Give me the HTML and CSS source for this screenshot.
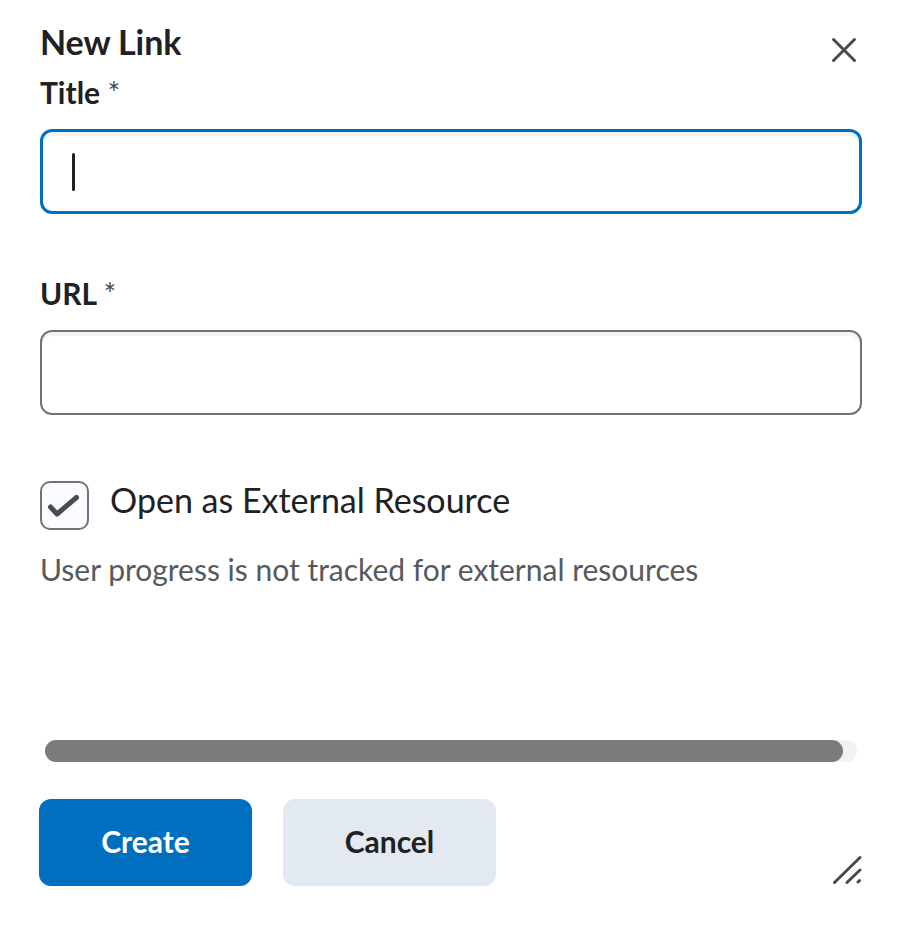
FILE: index.html
```html
<!DOCTYPE html>
<html lang="en">
<head>
    <meta charset="UTF-8">
    <meta name="viewport" content="width=device-width, initial-scale=1.0">
    <title>New Link</title>
    <link rel="stylesheet" href="styles.css">
</head>
<body>
    <div class="dialog">
        <div class="header">
            <h1>New Link</h1>
            <button class="close" aria-label="Close">
                <svg width="26" height="26" viewBox="0 0 26 26">
                    <path d="M2.5 2.5 L23.5 23.5 M23.5 2.5 L2.5 23.5" stroke="#494c4e" stroke-width="3" stroke-linecap="round" fill="none"/>
                </svg>
            </button>
        </div>

        <div class="field">
            <label class="label">Title <span class="req">*</span></label>
            <div class="input focused"><span class="caret"></span></div>
        </div>

        <div class="field url-field">
            <label class="label">URL <span class="req">*</span></label>
            <div class="input"></div>
        </div>

        <div class="check-row">
            <span class="checkbox">
                <svg width="45" height="45" viewBox="0 0 45 45">
                    <path d="M8.5 24 L15 31 L34.5 14.5" stroke="#494c4e" stroke-width="5" stroke-linecap="round" stroke-linejoin="round" fill="none"/>
                </svg>
            </span>
            <span class="check-label">Open as External Resource</span>
        </div>
        <p class="help">User progress is not tracked for external resources</p>

        <div class="scrollbar"><div class="thumb"></div></div>

        <div class="footer">
            <div class="buttons">
                <button class="btn primary">Create</button>
                <button class="btn secondary">Cancel</button>
            </div>
            <svg class="grip" width="30" height="30" viewBox="0 0 30 30">
                <path d="M2.5 27.5 L28 2.5 M15 27.5 L28 15 M26 27 L27.5 25.5" stroke="#494c4e" stroke-width="3" stroke-linecap="round" fill="none"/>
            </svg>
        </div>
    </div>
</body>
</html>
```

FILE: styles.css
```css
body {
    margin: 0;
    background: #fff;
    font-family: Lato, "Open Sans", sans-serif;
    color: #202122;
}
.dialog {
    padding: 21px 36px 0 40px;
}
.header {
    display: flex;
    justify-content: space-between;
    align-items: flex-start;
    height: 42px;
}
h1 {
    margin: 0;
    font-size: 34px;
    font-weight: 700;
    line-height: 42px;
    letter-spacing: -0.1px;
}
.close {
    background: none;
    border: none;
    padding: 0;
    margin: 16px 5px 0 0;
    cursor: pointer;
}
.close svg {
    display: block;
}
.field {
    margin-top: 11px;
}
.url-field {
    margin-top: 61px;
}
.label {
    display: block;
    font-size: 30px;
    font-weight: 700;
    line-height: 36px;
}
.req {
    font-weight: 400;
    color: #494c4e;
}
.input {
    margin-top: 19px;
    height: 85px;
    border: 2px solid #6e7477;
    border-radius: 12px;
    box-sizing: border-box;
    box-shadow: inset 0 4px 0 #f1f3f5;
    display: flex;
    align-items: center;
    padding-left: 30px;
}
.input.focused {
    border: 3px solid #006fbf;
    padding-left: 29px;
}
.caret {
    width: 3px;
    height: 38px;
    border-radius: 2px;
    background: #202122;
}
.check-row {
    display: flex;
    align-items: flex-start;
    margin-top: 66px;
}
.checkbox {
    width: 49px;
    height: 49px;
    box-sizing: border-box;
    border: 2px solid #6e7477;
    border-radius: 10px;
    background: #f9fbff;
}
.checkbox svg {
    display: block;
}
.check-label {
    margin: -1px 0 0 21px;
    font-size: 34px;
    line-height: 40px;
}
.help {
    margin: 21px 0 0;
    font-size: 30px;
    line-height: 36px;
    color: #565a5c;
}
.scrollbar {
    margin: 153px 5px 0 5px;
    height: 22px;
    border-radius: 11px;
    background: #f2f2f2;
}
.thumb {
    width: 798px;
    height: 22px;
    border-radius: 11px;
    background: #7b7b7b;
}
.footer {
    display: flex;
    justify-content: space-between;
    align-items: flex-end;
    margin-top: 37px;
}
.buttons {
    display: flex;
    gap: 31px;
    margin-left: -1px;
}
.btn {
    width: 213px;
    height: 87px;
    padding: 0 0 4px;
    border: none;
    border-radius: 12px;
    font-family: Lato, "Open Sans", sans-serif;
    font-size: 30px;
    font-weight: 700;
    cursor: pointer;
}
.primary {
    background: #006fbf;
    color: #fff;
}
.secondary {
    background: #e3e9f1;
    color: #202122;
}
.grip {
    display: block;
    margin-bottom: 1px;
}
```
